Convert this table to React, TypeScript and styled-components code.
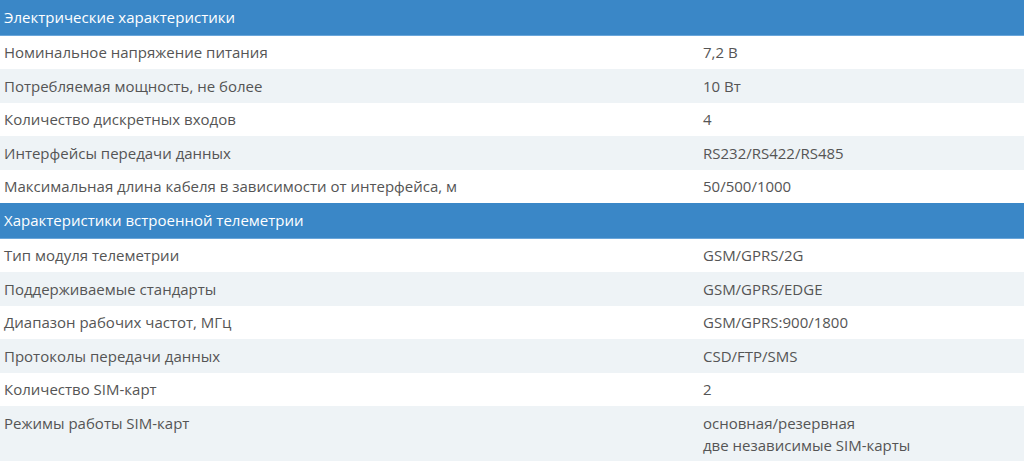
import React from "react";
import styled, { createGlobalStyle } from "styled-components";

const Global = createGlobalStyle`
  html, body { margin: 0; padding: 0; background: #fff; }
  body { font-family: "Open Sans", "Noto Sans", sans-serif; }
`;

const Table = styled.div`
  display: flex;
  flex-direction: column;
  width: 1024px;
`;

const SectionHeader = styled.div`
  background: #3a87c7;
  color: #ffffff;
  font-size: 15px;
  line-height: 22.5px;
  padding: 6px 4px 6px 4px;
  border-bottom: 1px solid #6aa6da;
`;

const Row = styled.div<{ $alt: boolean }>`
  display: grid;
  grid-template-columns: 699px 1fr;
  background: ${(p) => (p.$alt ? "#eef3f6" : "#ffffff")};
  color: #555555;
  font-size: 15px;
  line-height: 22.5px;
`;

const Cell = styled.div`
  padding: 5.5px 4px;
`;

type Section = { title: string; rows: [string, string[]][] };

const data: Section[] = [
  {
    title: "Электрические характеристики",
    rows: [
      ["Номинальное напряжение питания", ["7,2 В"]],
      ["Потребляемая мощность, не более", ["10 Вт"]],
      ["Количество дискретных входов", ["4"]],
      ["Интерфейсы передачи данных", ["RS232/RS422/RS485"]],
      ["Максимальная длина кабеля в зависимости от интерфейса, м", ["50/500/1000"]],
    ],
  },
  {
    title: "Характеристики встроенной телеметрии",
    rows: [
      ["Тип модуля телеметрии", ["GSM/GPRS/2G"]],
      ["Поддерживаемые стандарты", ["GSM/GPRS/EDGE"]],
      ["Диапазон рабочих частот, МГц", ["GSM/GPRS:900/1800"]],
      ["Протоколы передачи данных", ["CSD/FTP/SMS"]],
      ["Количество SIM-карт", ["2"]],
      ["Режимы работы SIM-карт", ["основная/резервная", "две независимые SIM-карты"]],
    ],
  },
];

export default function App() {
  return (
    <>
      <Global />
      <Table>
        {data.map((s) => (
          <React.Fragment key={s.title}>
            <SectionHeader>{s.title}</SectionHeader>
            {s.rows.map(([label, vals], i) => (
              <Row key={label} $alt={i % 2 === 1}>
                <Cell>{label}</Cell>
                <Cell>
                  {vals.map((v, j) => (
                    <div key={j}>{v}</div>
                  ))}
                </Cell>
              </Row>
            ))}
          </React.Fragment>
        ))}
      </Table>
    </>
  );
}
